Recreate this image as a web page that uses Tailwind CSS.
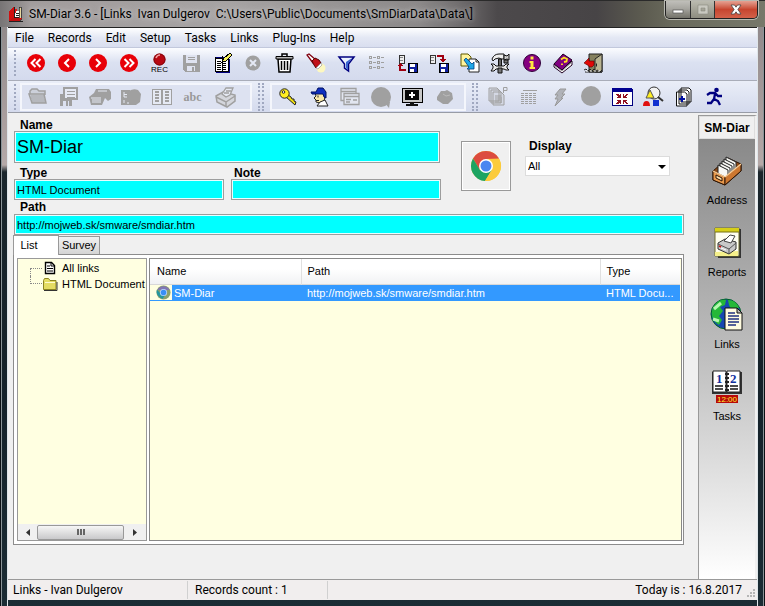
<!DOCTYPE html>
<html lang="en">
<head>
<meta charset="utf-8">
<meta name="viewport" content="width=device-width, initial-scale=1">
<title>SM-Diar 3.6</title>
<script src="https://cdn.jsdelivr.net/npm/@tailwindcss/browser@4"></script>
</head>
<body class="min-h-screen flex flex-col bg-[#1b262c] px-[8px] pb-[6px] text-[11px] text-black font-['Liberation_Sans',Arial,sans-serif] bg-[linear-gradient(90deg,#0b1014_0_1px,#8a9498_1px_2px,transparent_2px_7px,#dfe6ea_7px_8px,transparent_8px_calc(100%-8px),#dfe6ea_calc(100%-8px)_calc(100%-7px),transparent_calc(100%-7px)_calc(100%-2px),#8a9498_calc(100%-2px)_calc(100%-1px),#0b1014_calc(100%-1px)),linear-gradient(180deg,#8a8486_0,#b5a9a8_165px,#1b262c_172px,#15222a_400px,#1b2c34_100%)]">

<!-- Title bar -->
<header class="-mx-[8px] h-[27px] shrink-0 flex items-start border-t border-[#2a2a2a] pl-[8px] pr-[7px] bg-[linear-gradient(90deg,#777475_0,#a19c9c_4%,#a6a3a3_30%,#8b8888_55%,#706d6e_60%,#4c494b_65%,#474446_78%,#5c5b50_84%,#6a6a5c_88%,#77786a_100%)]">
  <svg class="w-4 h-4 mt-[5px] shrink-0" viewBox="0 0 16 16" shape-rendering="crispEdges"><path d="M1 5 6 1v12l-5 2z" fill="#d01010"/><path d="M6 3h3v9H6z" fill="#e01818"/><path d="M8 5h5v8H6z" fill="#fff"/><path d="M11 1h2v13h-2z" fill="#e8d8a0" stroke="#222" stroke-width=".7"/><path d="M1 15l4-3h9l-2 3z" fill="#c01010"/><path d="M8 7h3M8 9h3M7 11h4M1 15.500h14M6 1v11" stroke="#222" fill="none"/></svg>
  <h1 class="mt-[5px] ml-[5px] text-[12px] leading-4 font-['Roboto',sans-serif] whitespace-pre flex-1 [text-shadow:0_0_8px_#ffffff80,0_0_4px_#ffffff60]">SM-Diar 3.6 - [Links  Ivan Dulgerov  C:\Users\Public\Documents\SmDiarData\Data\]</h1>
  <div class="flex h-[18px] rounded-b-[5px] border border-t-0 border-[#222] overflow-hidden shadow-[0_0_0_1px_#b8b8b0]">
    <button aria-label="Minimize" class="w-[25px] border-r border-[#333] bg-linear-to-b from-[#c0bfba] via-[#a6a59f] via-45% to-[#74736a] flex justify-center items-center"><svg class="w-3 h-3" viewBox="0 0 12 12"><rect x="1" y="6" width="10" height="3" fill="#fff" stroke="#555" stroke-width=".7"/></svg></button>
    <button aria-label="Maximize" class="w-[24px] border-r border-[#333] bg-linear-to-b from-[#bbbbb0] to-[#8e8d80] flex justify-center items-center"><svg class="w-3 h-3" viewBox="0 0 12 12"><path d="M1 1h10v9H1zM4 4v3h4V4z" fill="#c9c9c0" fill-rule="evenodd" stroke="#8b8b80" stroke-width=".6"/></svg></button>
    <button aria-label="Close" class="w-[42px] bg-linear-to-b from-[#e5a192] via-[#c7452f] via-50% to-[#d4614a] flex justify-center items-center"><svg class="w-3 h-3" viewBox="0 0 12 12"><path d="M1 1h3.500l1.500 2.200L7.500 1H11L7.900 5.500 11 10H7.500L6 7.800 4.500 10H1l3.100-4.500z" fill="#fff" stroke="#444" stroke-width=".8"/></svg></button>
  </div>
</header>

<div class="flex-1 flex flex-col bg-[#f0f0f0] border-t border-[#222] min-h-0">

<!-- Menu -->
<nav class="h-[20px] shrink-0 flex items-center gap-[14px] pl-[7px] text-[12px] font-['Roboto',sans-serif] bg-linear-to-b from-white via-[#e4e8f4] via-50% to-[#d9deef] border-b border-[#c2c8dc]">
  <a href="#">File</a><a href="#">Records</a><a href="#">Edit</a><a href="#">Setup</a><a href="#">Tasks</a><a href="#">Links</a><a href="#">Plug-Ins</a><a href="#">Help</a>
</nav>

<!-- Main toolbar -->
<div role="toolbar" aria-label="Main" class="h-[33px] shrink-0 flex items-center pl-[6px] pb-[2px] border-b border-[#a9adb9] bg-linear-to-b from-[#fbfcff] via-[#dbe1f1] via-45% to-[#d4daed] [&>button]:w-[31px] [&>button]:h-[30px] [&>button]:flex [&>button]:flex-col [&>button]:items-center [&>button]:justify-center [&_svg]:w-[22px] [&_svg]:h-[22px] [&_svg]:shrink-0">
  <span class="w-[2px] h-[26px] mr-[4px] bg-[repeating-linear-gradient(180deg,#a0a8c0_0_2px,transparent_2px_4px)]"></span>
  <button aria-label="First"><svg viewBox="0 0 22 22"><circle cx="11" cy="11" r="9" fill="#e80008"/><path d="M10.500 7l-4 4 4 4M15.500 7l-4 4 4 4" fill="none" stroke="#fff" stroke-width="2"/></svg></button>
  <button aria-label="Previous"><svg viewBox="0 0 22 22"><circle cx="11" cy="11" r="9" fill="#e80008"/><path d="M13 7l-4 4 4 4" fill="none" stroke="#fff" stroke-width="2"/></svg></button>
  <button aria-label="Next"><svg viewBox="0 0 22 22"><circle cx="11" cy="11" r="9" fill="#e80008"/><path d="M9 7l4 4-4 4" fill="none" stroke="#fff" stroke-width="2"/></svg></button>
  <button aria-label="Last"><svg viewBox="0 0 22 22"><circle cx="11" cy="11" r="9" fill="#e80008"/><path d="M6.500 7l4 4-4 4M11.500 7l4 4-4 4" fill="none" stroke="#fff" stroke-width="2"/></svg></button>
  <button class="text-[8px] leading-[8px]"><svg class="h-[13px]! w-[13px]!" viewBox="0 0 13 13"><circle cx="6.500" cy="6.500" r="6" fill="#b80812"/><circle cx="6.500" cy="6.500" r="5.500" fill="none" stroke="#7c0810"/><path d="M3 5q1-3 4-3" stroke="#f3a0a0" stroke-width="1.500" fill="none"/></svg>REC</button>
  <button aria-label="Save"><svg viewBox="0 0 22 22" shape-rendering="crispEdges"><path d="M3 3h17v17H5l-2-2z" fill="#a0a0a0"/><path d="M6 3h11v8H6zM7 14h8v5H7z" fill="#dfe3f0"/><path d="M8 5h7M8 7h7" stroke="#a0a0a0"/><path d="M12 15h2v4h-2z" fill="#a0a0a0"/></svg></button>
  <button aria-label="Edit record"><svg viewBox="0 0 22 22" shape-rendering="crispEdges"><path d="M4 5h13v14H4z" fill="#fff" stroke="#000"/><path d="M5 5h11v2H5z" fill="#000080"/><path d="M6 9h4M6 11h4M6 13h4M6 15h4M6 17h4M12 11h3M12 13h3M12 15h3M12 17h3M5 6h11" stroke="#000"/><path d="M11 4v15" stroke="#000"/><path d="M11 10l2-4 6-5 2 2-6 6z" fill="#f4f060" stroke="#000"/><path d="M18 7v13H5" fill="none" stroke="#000080"/></svg></button>
  <button aria-label="Cancel"><svg viewBox="0 0 22 22"><circle cx="11" cy="11" r="7.500" fill="#a0a0a0"/><path d="M8 8l6 6M14 8l-6 6" stroke="#e4e8f4" stroke-width="2"/></svg></button>
  <button aria-label="Delete"><svg viewBox="0 0 22 22"><path d="M5 7h13l-1 13H6z" fill="#fff" stroke="#000" stroke-width="1.500"/><path d="M3 4.500h17v2.500H3z" fill="#b8b8b8" stroke="#000"/><path d="M9 4V2h5v2" fill="none" stroke="#000" stroke-width="1.500"/><path d="M8.500 9v9M11.500 9v9M14.500 9v9" stroke="#000" stroke-width="1.500"/></svg></button>
  <button aria-label="Find"><svg viewBox="0 0 22 22"><circle cx="17" cy="16" r="4.500" fill="#fdf8c0"/><path d="M3 3l2-1 7 6-3 3z" fill="#fff" stroke="#800010" stroke-width="1.300"/><path d="M8 9l3-3 4 2 2 3-5 5-2-3z" fill="#c01018" stroke="#500"/><path d="M17 11l1 2-4 4-2-1z" fill="#fff" stroke="#888" stroke-width=".6"/></svg></button>
  <button aria-label="Filter"><svg viewBox="0 0 22 22"><path d="M4 5h15l-5.500 7v7l-4-3v-4z" fill="#eaf2ff" stroke="#000080" stroke-width="1.500"/><path d="M11 10l6-4-4 6v6l-2-2z" fill="#3a65d0"/></svg></button>
  <button aria-label="Small icons"><svg viewBox="0 0 22 22" shape-rendering="crispEdges" stroke="#a0a0a0" fill="none"><path d="M3.500 4.500h2v2h-2zM11.500 4.500h2v2h-2zM3.500 9.500h2v2h-2zM11.500 9.500h2v2h-2zM3.500 14.500h2v2h-2zM11.500 14.500h2v2h-2z"/><path d="M7 5.500h3M15 5.500h3M7 10.500h3M15 10.500h3M7 15.500h3M15 15.500h3"/></svg></button>
  <button aria-label="Export data"><svg viewBox="0 0 22 22" shape-rendering="crispEdges"><path d="M2 3h5v8H2z" fill="#eee" stroke="#333"/><path d="M3 5h3M3 8h3" stroke="#888"/><path d="M3 13v5h6" fill="none" stroke="#a00010" stroke-width="2"/><path d="M0 14l3-3 4 3z" fill="#a00010"/><path d="M11 11h9v9h-9z" fill="#1020a0" stroke="#000"/><path d="M13 12h5v3h-5zM13 17h4v3h-4z" fill="#fff"/></svg></button>
  <button aria-label="Import data"><svg viewBox="0 0 22 22" shape-rendering="crispEdges"><path d="M2 3h5v8H2z" fill="#eee" stroke="#333"/><path d="M3 5h3M3 8h3" stroke="#888"/><path d="M9 4h6v4" fill="none" stroke="#a00010" stroke-width="2"/><path d="M12 7h6l-3 4z" fill="#a00010"/><path d="M11 11h9v9h-9z" fill="#1020a0" stroke="#000"/><path d="M13 12h5v3h-5zM13 17h4v3h-4z" fill="#fff"/></svg></button>
  <button aria-label="Copy"><svg viewBox="0 0 22 22"><path d="M2 2h7l3 3v9H2z" fill="#fff49c" stroke="#605800"/><path d="M10 7h7l3 3v10H10z" fill="#fff" stroke="#222"/><path d="M17 7v3h3" fill="none" stroke="#222"/><path d="M5 8l2-2 6 6 2-2v7H8l2-2z" fill="#20a8e8" stroke="#004080" stroke-width=".8"/></svg></button>
  <button aria-label="Tools"><svg viewBox="0 0 22 22"><path d="M2 7q2-5 7-5h5v5h-3l-2-1-4 1-2 2z" fill="#eee" stroke="#111"/><path d="M14 3l3 1 2-2v6l-2-1-3 1z" fill="#ccc" stroke="#111"/><path d="M8.500 7h3v13h-3z" fill="#666" stroke="#111"/><path d="M1 12h3l2 2h8l2-2h3l-2 2v2l2 2h-3l-2-1H6l-2 2H1l2-3v-2z" fill="#e8e8e8" stroke="#111"/><path d="M14 8h4v3h-4zM8 16h4v5H8z" fill="#777" stroke="#111"/></svg></button>
  <button aria-label="Information"><svg viewBox="0 0 22 22"><circle cx="11" cy="11" r="8.500" fill="#850080" stroke="#30003a"/><path d="M9.500 4.500h3v3h-3zM8.500 9h4v6H14v2H8.500v-2h1v-4h-1z" fill="#ffe840"/></svg></button>
  <button aria-label="Help"><svg viewBox="0 0 22 22"><path d="M2 12l8 6 10-9v4l-10 8-8-6z" fill="#fff" stroke="#200020"/><path d="M2 12L11 2l9 6-10 10z" fill="#800080" stroke="#200020"/><path d="M3 14l7 5 9-8" fill="none" stroke="#777" stroke-width=".7"/><path d="M9 7.500l3-2 3 1.500-.5 2.500-2.500.5M10 11.500v1.500" stroke="#ffe020" stroke-width="1.800" fill="none"/></svg></button>
  <button aria-label="Exit"><svg viewBox="0 0 22 22"><path d="M6 2h13v18H6z" fill="#84805f" stroke="#222"/><path d="M12 7l7-5v18h-7z" fill="#b9b492" stroke="#222"/><path d="M13.500 11.500v3" stroke="#222"/><path d="M1 11l5-5v3h5v4l-2 2H6v-1z" fill="#e00808" stroke="#500" stroke-width=".6"/><path d="M1 18l2-1 2 2 2-2 2 2 2-2 2 2 2-1 2 2 2-2M2 20h17" stroke="#222" fill="none"/><path d="M3 19h14" stroke="#fff" stroke-dasharray="2 2"/></svg></button>
</div>

<!-- Tool groups -->
<div class="h-[32px] shrink-0 flex items-center pl-[6px] border-b border-[#989ca6] bg-linear-to-b from-[#eaeef8] to-[#d4daed] [&_button]:w-[31px] [&_button]:h-[26px] [&_button]:flex [&_button]:items-center [&_button]:justify-center [&_svg]:w-[22px] [&_svg]:h-[22px] [&_svg]:shrink-0">
  <span class="w-[2px] h-[26px] mr-[4px] bg-[repeating-linear-gradient(180deg,#a0a8c0_0_2px,transparent_2px_4px)]"></span>
  <div role="toolbar" aria-label="Documents" class="flex h-[28px] w-[232px] border-2 border-[#f4f6fc] items-center bg-[#dde2f1]">
    <button disabled aria-label="Open"><svg viewBox="0 0 22 22"><path d="M3 8V5l2-2h5l2 2h6v4M2 8h15l2 9H5z" fill="#ccd0da" stroke="#a0a0a0" stroke-width="1.500"/><path d="M4 10h13M4 12h13M5 14h13M5 16h13" stroke="#a0a0a0"/></svg></button>
    <button disabled aria-label="Save document"><svg viewBox="0 0 22 22" shape-rendering="crispEdges"><path d="M2 8h12v12H2z" fill="#a0a0a0"/><path d="M5 15h6v5H5z" fill="#dde2f1"/><path d="M8 15h2v5H8z" fill="#a0a0a0"/><path d="M6 2h13v11H6z" fill="#e6eaf4" stroke="#a0a0a0" stroke-width="2"/><path d="M9 5h8M9 8h8M9 11h8" stroke="#a0a0a0"/></svg></button>
    <button disabled aria-label="Print document"><svg viewBox="0 0 22 22"><path d="M0 11l5-4 2-4h13l2 3v7l-3 2-3-3-3 7H2z" fill="#a0a0a0"/><path d="M2 12h10M3 14h9M3 16h9M9 5h9" stroke="#e6eaf4"/></svg></button>
    <button disabled aria-label="Fax document"><svg viewBox="0 0 22 22"><path d="M1 4h9v15H1z" fill="#a0a0a0"/><path d="M8 6q4-4 10-2l3 4-1 8-4 3H9z" fill="#a0a0a0"/><path d="M4 6v5h3M4 8.500h3M4 14v3M7 17h2" stroke="#e6eaf4" fill="none"/></svg></button>
    <button disabled aria-label="Compare"><svg viewBox="0 0 22 22" shape-rendering="crispEdges"><path d="M1 3h9v15H1zM11 3h9v15h-9z" fill="#e6eaf4" stroke="#a0a0a0"/><path d="M4 6h4M4 9h4M4 12h4M4 15h4M14 6h4M14 9h4M14 12h4M14 15h4" stroke="#a0a0a0" stroke-width="2"/></svg></button>
    <button disabled class="text-[12px] font-bold font-['Liberation_Serif',serif] text-[#999]">abc</button>
    <button disabled aria-label="Print"><svg class="ml-[4px]" viewBox="0 0 22 22"><path d="M1 10l7-4 12 3v6l-8 6-10-5z" fill="#d4d6dc" stroke="#a0a0a0" stroke-width="1.500"/><path d="M7 8l4-6h7l-3 7-4 2z" fill="#e6eaf4" stroke="#a0a0a0" stroke-width="1.300"/><path d="M1 11l10 5 9-6M11 16v5M11 5h5M9 7h5" stroke="#a0a0a0" stroke-width="1.500" fill="none"/></svg></button>
  </div>
  <span class="w-[6px] h-[28px] ml-[6px] mr-[6px] border-l-2 border-r-2 border-dotted border-[#a0a8c0]"></span>
  <div role="toolbar" aria-label="Account" class="flex h-[28px] w-[196px] border-2 border-[#f4f6fc] items-center bg-[#dde2f1]">
    <button aria-label="Password"><svg viewBox="0 0 22 22"><path d="M9 11l9 8 1-3-2-1v-2l-2 0-1-2-3-2z" fill="#f0e010" stroke="#222"/><circle cx="7.500" cy="7.500" r="4.700" fill="#ffee20" stroke="#222"/><circle cx="6.500" cy="6" r="1.300" fill="#fff" stroke="#222"/></svg></button>
    <button aria-label="User"><svg viewBox="0 0 22 22"><path d="M7 7h8l2 4-1 4-4 2-4-1v-2l-2-2 2-2z" fill="#fbeaa8" stroke="#222"/><path d="M3 6l5 0 2-4h5l3 4v6l-2-1-1-3-6 0H4z" fill="#1030c0" stroke="#001060"/><path d="M9 20l3-4 5-2 3 6z" fill="#fff" stroke="#222"/><path d="M10 9.500v2M8 14.500h3" stroke="#222"/></svg></button>
    <button disabled aria-label="Windows"><svg viewBox="0 0 22 22" fill="#e2e6f0" stroke="#a0a0a0" stroke-width="1.300"><path d="M2 2.500h15v12H2zM2 5.500h15"/><path d="M5 7.500h15v11H5zM5 10.500h15M7 13.500h5M7 16h4M14 14h4"/></svg></button>
    <button disabled aria-label="Search"><svg viewBox="0 0 22 22"><circle cx="11" cy="11" r="10" fill="#a0a0a0"/><path d="M14 16h6l-1 6z" fill="#a0a0a0"/></svg></button>
    <button aria-label="Monitor"><svg viewBox="0 0 22 22" shape-rendering="crispEdges"><path d="M1 2h20v14H1z" fill="#c8c8c8" stroke="#000" stroke-width="1"/><path d="M4 4h14v10H4z" fill="#080808"/><path d="M8 9h6M11 6v6" stroke="#fff" stroke-width="2"/><path d="M9 16h4v2h4v2H5v-2h4z" fill="#111"/></svg></button>
    <button disabled aria-label="Phone"><svg class="ml-[4px]" viewBox="0 0 22 22"><path d="M3 11l4-6h4l2-1 5 3 1 6-5 5H9l-6-4z" fill="#a0a0a0"/><path d="M9 8l3 2 4-1" stroke="#bbb" fill="none"/></svg></button>
  </div>
  <span class="w-[6px] h-[28px] ml-[6px] mr-[4px] border-l-2 border-r-2 border-dotted border-[#a0a8c0]"></span>
  <div role="toolbar" aria-label="Utilities" class="flex h-[28px] items-center">
    <button disabled aria-label="Pages"><svg viewBox="0 0 22 22" stroke="#a0a0a0" fill="#d4d8e4"><path d="M2 2h8l2 2v11H2zM4 4h8l2 2v11H4zM6 6h8l3 3v10H6z"/><path d="M8 10h6M8 12h7M8 14h7M8 16h7M16.500 7V1.500h3.500v3h-3" fill="none"/></svg></button>
    <button disabled aria-label="Calendar"><svg viewBox="0 0 22 22" shape-rendering="crispEdges" stroke="#a0a0a0"><path d="M5 4.500h14"/><path d="M3 7.500h16M3 9.500h16M3 11.500h16M3 13.500h16M3 15.500h16M3 17.500h16" stroke-dasharray="3 1"/></svg></button>
    <button disabled aria-label="Quick action"><svg viewBox="0 0 22 22"><path d="M11 3h6l-4 5h3l-4 4h2l-8 8 3-7H6l3-4H6z" fill="#b0b2b8" stroke="#999"/></svg></button>
    <button disabled aria-label="World"><svg viewBox="0 0 22 22"><circle cx="11" cy="10" r="10" fill="#a0a0a0"/></svg></button>
    <button aria-label="Full screen"><svg viewBox="0 0 22 22" shape-rendering="crispEdges"><path d="M1 3h20v16H1z" fill="#fff" stroke="#000080"/><path d="M1 2h20v4H1z" fill="#000090"/><path d="M5 8h2l2 2V8h1v4H6v-1h2l-3-2zM17 8h-2l-2 2V8h-1v4h4v-1h-2l3-2zM5 18h2l2-2v2h1v-4H6v1h2l-3 2zM17 18h-2l-2-2v2h-1v-4h4v1h-2l3 2z" fill="#901020"/></svg></button>
    <button aria-label="Objects"><svg viewBox="0 0 22 22"><circle cx="12" cy="7" r="6" fill="#f2f2f2" stroke="#333"/><path d="M16 11l5 4" stroke="#333" stroke-width="2"/><path d="M8 4l4 8H4z" fill="#ffee20" stroke="#555"/><path d="M1 20q0-5 3.500-5t3.500 5z" fill="#e01010"/><path d="M11 14h6v6h-6z" fill="#1030d0"/></svg></button>
    <button aria-label="Add records"><svg viewBox="0 0 22 22" fill="#fff" stroke="#111"><path d="M8 2h8l2 2v12H8zM6 4h8l2 2v12H6zM3.500 6h8l2.500 2v12H3.500z"/><path d="M9 10v6M6 13h6" stroke="#0010a0" stroke-width="2"/></svg></button>
    <button aria-label="Run"><svg viewBox="0 0 22 22"><circle cx="12.500" cy="4" r="2.300" fill="#000080"/><path d="M3 9l3-2 5 0 3 3h4M11 8l-1 5 4 2 2 4M10 13l-3 4H3" fill="none" stroke="#000080" stroke-width="2.300"/></svg></button>
  </div>
</div>

<main class="flex-1 flex min-h-0 pt-[2px]">
  <div class="flex-1 min-w-0 flex flex-col pl-[5px] pr-[14px] pb-[34px] pt-[4px]">
    <form class="pl-px flex flex-col">
      <div class="flex items-start">
        <div class="w-[427px] flex flex-col">
          <label for="name" class="pl-[6px] text-[12px] leading-[12px] font-bold">Name</label>
          <input id="name" value="SM-Diar" class="h-[32px] w-[426px] bg-[#00ffff] border border-[#9d9d9d] shadow-[inset_0_0_0_1px_#e8ffff] px-[2px] text-[18px]">
          <div class="flex gap-[7px] mt-[4px]">
            <div class="flex-1 min-w-0 flex flex-col">
              <label for="type" class="pl-[6px] text-[12px] leading-[12px] font-bold">Type</label>
              <input id="type" value="HTML Document" class="h-[21px] w-full bg-[#00ffff] border border-[#9d9d9d] shadow-[inset_0_0_0_1px_#e8ffff] px-[2px]">
            </div>
            <div class="flex-1 min-w-0 flex flex-col">
              <label for="note" class="pl-[3px] text-[12px] leading-[12px] font-bold">Note</label>
              <input id="note" class="h-[21px] w-full bg-[#00ffff] border border-[#9d9d9d] shadow-[inset_0_0_0_1px_#e8ffff] px-[2px]">
            </div>
          </div>
        </div>
        <button type="button" aria-label="Open in browser" class="ml-[20px] mt-[22px] w-[50px] h-[50px] border border-[#999] shadow-[inset_0_0_0_1px_#fff] flex items-center justify-center">
          <svg class="w-8 h-8" viewBox="0 0 32 32"><circle cx="16" cy="16" r="15" fill="#fbcb3c"/><path d="M3 8.500A15 15 0 0 1 29 8.500L16 9l-6.500 10.500z" fill="#dc4b3e"/><path d="M3 8.500A15 15 0 0 0 15 31L22 19.500 10 20z" fill="#1da462"/><path d="M16 9h13.200A15 15 0 0 1 15 31l7.200-11.500z" fill="#fbcb3c"/><circle cx="16" cy="16" r="7" fill="#fff"/><circle cx="16" cy="16" r="5.500" fill="#4a86f0"/></svg>
        </button>
        <div class="ml-[14px] mt-[21px] flex flex-col">
          <label for="display" class="pl-[4px] mb-[3px] text-[12px] leading-[13px] font-bold">Display</label>
          <div class="relative">
            <select id="display" class="appearance-none w-[145px] h-[20px] bg-white border border-[#dcdcdc] pl-[2px] block"><option>All</option></select>
            <svg class="absolute right-[4px] top-[9px] w-[8px] h-[4px] pointer-events-none" viewBox="0 0 8 4"><path d="M0 0h8L4 4z"/></svg>
          </div>
        </div>
      </div>
      <label for="path" class="mt-px pl-[6px] text-[12px] leading-[13px] font-bold">Path</label>
      <input id="path" value="http://mojweb.sk/smware/smdiar.htm" class="h-[21px] w-full bg-[#00ffff] border border-[#9d9d9d] shadow-[inset_0_0_0_1px_#e8ffff] px-[2px]">
    </form>

    <div role="tablist" class="flex items-end h-[19px] shrink-0">
      <button role="tab" aria-selected="true" class="relative z-10 w-[46px] h-[20px] -mb-px pr-[14px] bg-white border border-b-0 border-[#999]">List</button>
      <button role="tab" class="w-[42px] h-[18px] -ml-px bg-linear-to-b from-[#f2f2f2] to-[#d4d4d4] border border-b-0 border-[#999]">Survey</button>
    </div>

    <section class="flex-1 min-h-0 flex gap-[2px] bg-white border border-[#8c8c8c] p-[3px] pr-px">
      <div class="w-[130px] shrink-0 flex flex-col bg-[#ffffe1] border border-[#999]">
        <ul class="flex-1 overflow-hidden pt-px pl-[12px] whitespace-nowrap leading-[16px]">
          <li class="flex items-center"><span class="w-[12px] h-[8px] self-end border-l border-t border-dotted border-[#888]"></span><svg class="w-4 h-4 shrink-0 mr-[4px]" viewBox="0 0 16 16"><path d="M3.500 2.500h6l3 3v8h-9z" fill="#fff" stroke="#000" stroke-width="1.400"/><path d="M9 2.500V6h3.500M5 6h3M5 8.500h6M5 11h6" stroke="#000" fill="none"/></svg>All links</li>
          <li class="flex items-center"><span class="w-[12px] h-[8px] self-start border-l border-b border-dotted border-[#888]"></span><svg class="w-4 h-4 shrink-0 mr-[4px]" viewBox="0 0 16 16"><path d="M1.500 13.500v-9l1-2h4l1.500 2h6v9z" fill="#e4dc62" stroke="#8b8420"/><path d="M2 14.500h13V6" fill="none" stroke="#333"/><path d="M3 6.500h10" stroke="#fffbd0"/></svg>HTML Document</li>
        </ul>
        <div class="h-[16px] shrink-0 flex items-center bg-[#f0f0f0]">
          <button aria-label="Scroll left" class="w-[19px] flex justify-center"><svg class="w-[4px] h-[7px]" viewBox="0 0 4 7"><path d="M4 0v7L0 3.500z" fill="#333"/></svg></button>
          <div class="w-[87px] h-[15px] border border-[#999] rounded-[2px] bg-linear-to-b from-[#f6f6f6] to-[#c9c9cb] flex items-center justify-center"><span class="w-[8px] h-[6px] bg-[repeating-linear-gradient(90deg,#666_0_2px,transparent_2px_3px)]"></span></div>
          <button aria-label="Scroll right" class="flex-1 flex justify-center"><svg class="w-[4px] h-[7px]" viewBox="0 0 4 7"><path d="M0 0v7l4-3.500z" fill="#333"/></svg></button>
        </div>
      </div>
      <div class="flex-1 min-w-0 bg-[#ffffe1] border border-[#888] pr-px">
        <table class="w-full table-fixed border-collapse text-left">
          <colgroup><col class="w-[151px]"><col><col class="w-[80px]"></colgroup>
          <thead><tr class="h-[25px] bg-linear-to-b from-white from-40% to-[#f1f2f4]">
            <th class="font-normal pl-[7px] border-r border-[#e0e0e0]">Name</th><th class="font-normal pl-[6px] border-r border-[#e0e0e0]">Path</th><th class="font-normal pl-[6px]">Type</th></tr></thead>
          <tbody><tr class="h-[17px] bg-[#3399ff] text-white border-t border-[#d8d8d8]">
            <td class="p-0"><div class="flex items-center"><span class="bg-[#ffffe1] pl-[6px] pr-px"><svg class="w-[15px] h-[15px] block" viewBox="0 0 16 16"><circle cx="8" cy="8" r="7.500" fill="#8ba06c"/><path d="M1.500 5A7.500 7.500 0 0 1 14.500 5L8 6z" fill="#8076b4"/><path d="M1 5q-2 6 6 10l3-5-5-1z" fill="#24979e"/><circle cx="8" cy="8" r="3.800" fill="#bfdcff"/><circle cx="8" cy="8" r="3" fill="#398ef5"/></svg></span><span class="pl-[2px]">SM-Diar</span></div></td>
            <td class="py-0 pl-[6px] pr-0">http://mojweb.sk/smware/smdiar.htm</td><td class="py-0 pl-[6px] pr-0">HTML Docu...</td></tr></tbody>
        </table>
      </div>
    </section>
  </div>

  <!-- Shortcut bar -->
  <aside class="w-[59px] shrink-0 flex flex-col border-l border-t border-[#999] bg-linear-to-b from-[#848484] via-[#bcbcbc] via-50% to-white border-r-2 border-r-[#f0f0f0]">
    <h2 class="h-[23px] flex items-center justify-center text-[12px] font-bold bg-[#f0f0f0] border border-[#ddd]">SM-Diar</h2>
    <a href="#" class="flex flex-col items-center gap-[4px] mt-[15px] h-[72px]"><svg class="w-[34px] h-[34px]" viewBox="0 0 34 34"><path d="M3 17L18 4l13 6v7L15 31 3 26z" fill="#8c4a18" stroke="#2c1404"/><g fill="#f8f8f4" stroke="#222"><path d="M16 3l10 5v11l-10-5z"/><path d="M14 5l10 5v11l-10-5z"/><path d="M12 7l10 5v11l-10-5z"/><path d="M10 9l10 5v11l-10-5z"/><path d="M8 11l10 5v11L8 22z"/></g><path d="M3 17l12 6v8L3 26z" fill="#e8994c" stroke="#2c1404"/><path d="M15 23l16-13v7L15 31z" fill="#cc7730" stroke="#2c1404"/><path d="M15 23L31 10M3 17l12 6" stroke="#ffd29a" stroke-width="1.300"/><path d="M6 21l6 3v3l-6-3z" fill="#ffe0ac" stroke="#2c1404"/></svg>Address</a>
    <a href="#" class="flex flex-col items-center gap-[4px] h-[72px]"><svg class="w-[34px] h-[34px]" viewBox="0 0 34 34"><path d="M6 3h25v29H8z" fill="#333"/><path d="M5 2h24v28H5z" fill="#fffff0" stroke="#6c6a30"/><path d="M5 2h24v4H5z" fill="#d6cf18"/><path d="M5 6h24" stroke="#777010"/><path d="M5 26l23-1v5H5z" fill="#f5f08a"/><path d="M8 17l7-4 11 3v7l-7 5-11-5z" fill="#c9c9c9" stroke="#333"/><path d="M14 15l6-6 5 1-4 7z" fill="#fff" stroke="#444"/><path d="M8 18l11 5 7-6M19 23v5" stroke="#555" fill="none"/><path d="M11 22l5 2" stroke="#fff"/><path d="M9 20l2 1" stroke="#d01010" stroke-width="1.500"/></svg>Reports</a>
    <a href="#" class="flex flex-col items-center gap-[4px] h-[72px]"><svg class="w-[34px] h-[34px]" viewBox="0 0 34 34"><circle cx="16" cy="16" r="15" fill="#1648b0" stroke="#062"/><path d="M3 9q6-9 13-7l-1 5-5 2 3 4-4 5 3 4-3 5Q-1 21 3 9zM18 2q8 0 11 8l-8 1-2-4z" fill="#25b838"/><path d="M4 11l7-6M3 21l6 2" stroke="#b5f8b0" stroke-width="3"/><path d="M15 10h12l5 5v17H15z" fill="#fffce0" stroke="#111"/><path d="M27 10v5h5z" fill="#bbb" stroke="#111"/><path d="M18 15h7M18 18h11M18 21h11M18 24h11M18 27h8" stroke="#203080" stroke-width="1.500"/></svg>Links</a>
    <a href="#" class="flex flex-col items-center gap-[4px] h-[72px]"><svg class="w-[34px] h-[34px]" viewBox="0 0 34 34"><path d="M2 2h30v22H2z" fill="#333"/><path d="M3 1h13v21H3zM17 1h13v21H17z" fill="#fff" stroke="#222"/><text x="6" y="13" font-family="Liberation Serif" font-size="13" font-weight="bold" fill="#1030a0">1</text><text x="20" y="13" font-family="Liberation Serif" font-size="13" font-weight="bold" fill="#1030a0">2</text><path d="M5 16h8M5 19h8M20 16h8M20 19h8" stroke="#111" stroke-width="1.500"/><path d="M15 4h4M15 8h4M15 12h4M15 16h4M15 20h4" stroke="#222" stroke-width="2"/><path d="M6 25h22v8H6z" fill="#b80808"/><text x="17" y="32" text-anchor="middle" font-family="Liberation Sans" font-size="8" fill="#ffee30">12:00</text></svg>Tasks</a>
  </aside>
</main>

<!-- Status bar -->
<footer class="h-[21px] shrink-0 flex items-center border-t border-[#999] bg-[#f1eeee] text-[12px] font-['Roboto',sans-serif] pl-[5px] leading-[18px]">
  <span class="w-[175px] border-r border-[#d0d0d0]">Links - Ivan Dulgerov</span>
  <span class="w-[140px] pl-[7px] border-r border-[#d0d0d0]">Records count : 1</span>
  <span class="ml-auto">Today is : 16.8.2017</span>
  <svg class="w-[11px] h-[11px] ml-[4px] self-end" viewBox="0 0 11 11" fill="#b5b5b5"><path d="M7 0h2v2H7zM4 3h2v2H4zM7 3h2v2H7zM1 6h2v2H1zM4 6h2v2H4zM7 6h2v2H7z"/></svg>
</footer>
</div>
</body>
</html>
